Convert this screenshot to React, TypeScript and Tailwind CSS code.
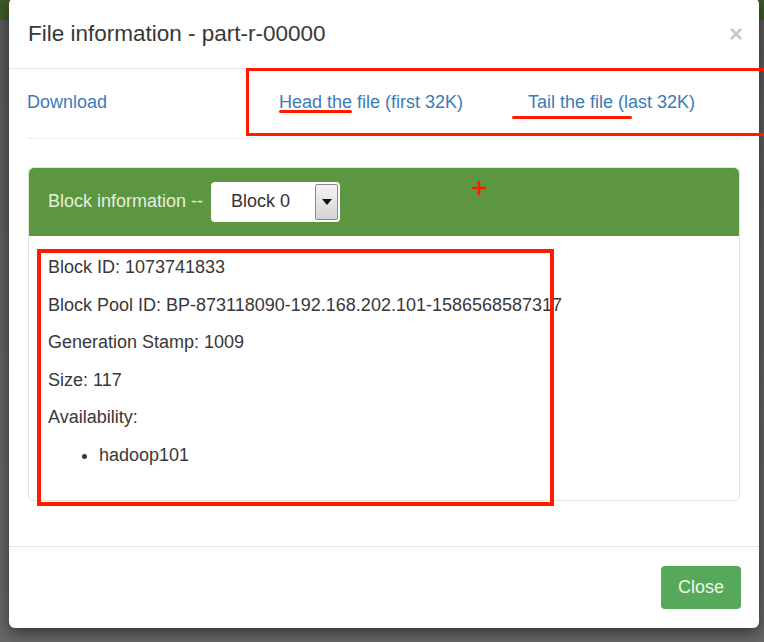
const lines = [
  "Block ID: 1073741833",
  "Block Pool ID: BP-873118090-192.168.202.101-1586568587317",
  "Generation Stamp: 1009",
  "Size: 117",
  "Availability:",
];

const BlockSelect = () => (
  <div className="ml-[8px] flex h-[40px] w-[129px] items-center rounded-[4px] bg-white pl-[20px] pr-[2px]">
    <span className="flex-1 text-[18px] text-[#333]">Block 0</span>
    <div className="flex h-[36px] w-[23px] items-center justify-center rounded-[2px] border border-[#8a8a8a] bg-gradient-to-b from-[#f4f4f4] to-[#d4d4d4]">
      <svg width="10" height="6" viewBox="0 0 10 6">
        <path d="M0 0h10L5 6z" fill="#111" />
      </svg>
    </div>
  </div>
);

export default function App() {
  return (
    <div className="relative h-[642px] w-[764px] overflow-hidden bg-gradient-to-b from-[#5a5a5a] to-[#686868] font-['Liberation_Sans',Arial,sans-serif]">
      <div className="h-[20px] w-full bg-[#3e5a26]" />

      <div className="absolute left-[9px] top-[-2px] w-[750px] rounded-[6px] bg-white shadow-[0_5px_15px_rgba(0,0,0,0.5)]">
        <div className="flex h-[71px] items-center justify-between border-b border-[#e5e5e5] px-[19px] pt-[2px]">
          <h4 className="text-[22.5px] text-[#383838]">File information - part-r-00000</h4>
          <span className="mr-[-3px] text-[24px] font-bold leading-none text-[#c8c8c8]">×</span>
        </div>

        <div className="px-[18px] pt-0">
          <div className="flex h-[70px] items-center border-b border-[#eee] pb-[3px] text-[18px] text-[#3d7ab8]">
            <a className="w-[252px]">Download</a>
            <a className="w-[249px]">Head the file (first 32K)</a>
            <a>Tail the file (last 32K)</a>
          </div>

          <div className="mx-[1px] mt-[28px] rounded-[5px] border border-[#dfe8d6]">
            <div className="flex h-[68px] items-center rounded-t-[5px] bg-[#5c9640] px-[19px] pb-[1px]">
              <span className="text-[18px] text-[#e4f0dc]">Block information --</span>
              <BlockSelect />
            </div>
            <div className="px-[19px] pb-[21px] pt-[18px] text-[18px] leading-[26px] text-[#383838]">
              {lines.map((l) => (
                <p key={l} className="mb-[11.5px]">{l}</p>
              ))}
              <ul className="mb-[11px] list-disc pl-[51px]">
                <li>hadoop101</li>
              </ul>
            </div>
          </div>
        </div>

        <div className="mt-[45px] flex h-[82px] items-center justify-end border-t border-[#e5e5e5] px-[18px] pt-[1px]">
          <button className="h-[43px] w-[80px] rounded-[4px] bg-[#56a95b] text-[18px] text-[#eef7e8]">Close</button>
        </div>
      </div>

      <div className="absolute left-[246px] top-[68px] h-[68px] w-[530px] border-[3px] border-[#ff1a00]" />
      <div className="absolute left-[279px] top-[110px] h-[3px] w-[73px] rounded-full bg-[#ff1a00]" />
      <div className="absolute left-[512px] top-[116px] h-[3px] w-[120px] rounded-full bg-[#ff1a00]" />
      <div className="absolute left-[37px] top-[249px] h-[257px] w-[517px] border-[4px] border-[#ff1a00]" />
      <svg className="absolute left-[472px] top-[181px]" width="14" height="14" viewBox="0 0 14 14">
        <path d="M7 0v14M0 7h14" stroke="#ff1a00" strokeWidth="2.5" />
      </svg>
    </div>
  );
}
